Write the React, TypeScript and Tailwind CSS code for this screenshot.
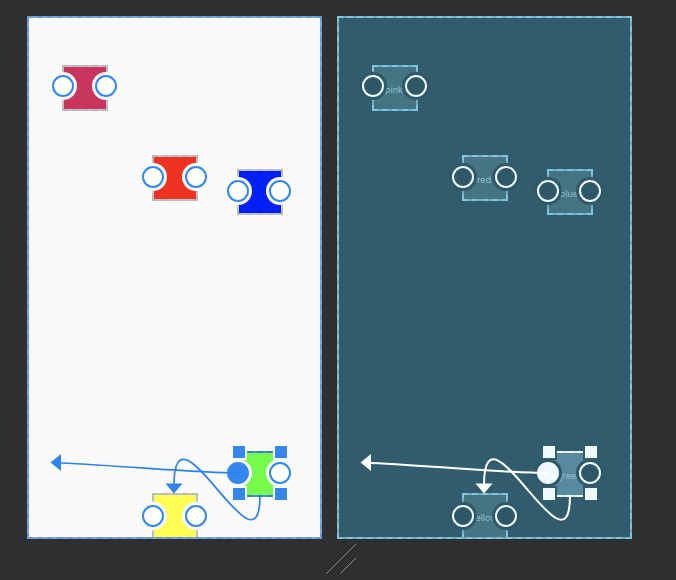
import { clsx } from "clsx";

type Mode = "design" | "blueprint";

type NodeSpec = {
  name: string;
  place: string;
  fill: string;
  anchorRow: string;
  rightAnchor: string;
  selected?: boolean;
};

const nodes: NodeSpec[] = [
  { name: "pink", place: "left-[33px] top-[47px]", fill: "bg-[#c9355f]", anchorRow: "top-[7px]", rightAnchor: "left-[30px]" },
  { name: "red", place: "left-[123px] top-[137px]", fill: "bg-[#ee3224]", anchorRow: "top-2", rightAnchor: "left-[30px]" },
  { name: "blue", place: "left-[208px] top-[151px]", fill: "bg-[#0020f5]", anchorRow: "top-2", rightAnchor: "left-[29px]" },
  { name: "yellow", place: "left-[123px] top-[475px]", fill: "bg-[#fffd54]", anchorRow: "top-[9px]", rightAnchor: "left-[30px]" },
  { name: "green", place: "left-[208px] top-[433px]", fill: "bg-[#75fb4c]", anchorRow: "top-2", rightAnchor: "left-[29px]", selected: true },
];

const corners = [
  { name: "top left", place: "-left-1.5 -top-[7px]" },
  { name: "top right", place: "left-9 -top-[7px]" },
  { name: "bottom left", place: "-left-1.5 top-[35px]" },
  { name: "bottom right", place: "left-9 top-[35px]" },
];

function Anchor({ mode, place, label, filled }: { mode: Mode; place: string; label: string; filled?: boolean }) {
  const design = mode === "design";
  return (
    <button
      type="button"
      aria-label={label}
      className={clsx(
        "absolute flex size-7 items-center justify-center rounded-full",
        place,
        design ? "bg-[#fafafa]" : "bg-[#2f596b]",
      )}
    >
      <span
        className={clsx(
          "size-[22px] rounded-full border-2",
          design && (filled ? "border-[#3586ee] bg-[#3586ee]" : "border-[#3388ee] bg-white"),
          !design && (filled ? "border-[#effaff] bg-[#effaff]" : "border-[#effaff] bg-[#2e586a]"),
        )}
      />
    </button>
  );
}

function CanvasNode({ node, mode }: { node: NodeSpec; mode: Mode }) {
  const design = mode === "design";
  return (
    <div className={clsx("absolute size-[46px]", node.place)}>
      <div
        className={clsx(
          "size-full border-2 border-dashed",
          design && !node.selected && "border-[#b8babc] bg-[#c4c5c6]",
          design && node.selected && "border-[#2f7fd9] bg-[#4c93d6]",
          !design && !node.selected && "border-[#86c3d6] bg-[#70acc0]",
          !design && node.selected && "border-[#effaff] bg-[#d5e9f1]",
        )}
      >
        <div
          className={clsx(
            "flex size-full items-center justify-center font-['Inter',sans-serif] text-[9px] leading-3 text-[#8fc0d0]",
            design ? node.fill : node.selected ? "bg-[#58899f]" : "bg-[#457483]",
          )}
        >
          {!design && <span className="pt-1 pr-0.5">{node.name}</span>}
        </div>
      </div>
      <Anchor
        mode={mode}
        place={clsx("-left-[13px]", node.anchorRow)}
        label={`${node.name} left anchor`}
        filled={node.selected}
      />
      <Anchor mode={mode} place={clsx(node.rightAnchor, node.anchorRow)} label={`${node.name} right anchor`} />
      {node.selected &&
        corners.map((corner) => (
          <button
            key={corner.name}
            type="button"
            aria-label={`Resize ${node.name} ${corner.name}`}
            className={clsx(
              "absolute size-4 border-2",
              corner.place,
              design ? "border-[#fafafa] bg-[#3586ee]" : "border-[#305c6d] bg-[#effaff]",
            )}
          />
        ))}
    </div>
  );
}

function Connections({ mode }: { mode: Mode }) {
  const design = mode === "design";
  return (
    <svg
      aria-hidden="true"
      className={clsx(
        "pointer-events-none absolute inset-0 size-full",
        design ? "text-[#2d82ec]" : "text-white",
      )}
    >
      <g transform="translate(-2 -2)">
        <g fill="none" stroke="currentColor" strokeWidth={design ? 1.7 : 2}>
          <path d="M211 457 C170 457 100 450 34 447" />
          <path d="M233 481 C232 566 148 379 147 468" />
        </g>
        <g fill="currentColor">
          <path d="M23.5 446.5 L34 438 V455 Z" />
          <path d="M138.500 467.500 H155.500 L147 477.500 Z" />
        </g>
      </g>
    </svg>
  );
}

function Surface({ mode }: { mode: Mode }) {
  const design = mode === "design";
  return (
    <section
      aria-label={design ? "Design" : "Blueprint"}
      className={clsx(
        "relative flex flex-1 overflow-hidden border-2 border-dashed",
        design ? "border-[#6799d2] bg-[#7ea8d8]" : "border-[#84c3d5] bg-[#6caabe]",
      )}
    >
      <div className={clsx("flex-1", design ? "bg-[#fafafa]" : "bg-[#305c6d]")} />
      {nodes.map((node) => (
        <CanvasNode key={node.name} node={node} mode={mode} />
      ))}
      <Connections mode={mode} />
    </section>
  );
}

export default function App() {
  return (
    <main className="flex min-h-screen flex-col bg-[#2d2f31] pt-4">
      <div className="flex min-h-[523px] flex-1 gap-[15px] pr-11 pl-[27px]">
        <Surface mode="design" />
        <Surface mode="blueprint" />
      </div>
      <footer className="flex h-[41px] justify-center pt-1 pl-1.5">
        <svg aria-hidden="true" className="h-8 w-[30px] text-[#909192]" viewBox="0 0 30 32" fill="none" stroke="currentColor">
          <path d="M0.500 30.500 L30 1 M14.500 30.500 L30 15" />
        </svg>
      </footer>
    </main>
  );
}
